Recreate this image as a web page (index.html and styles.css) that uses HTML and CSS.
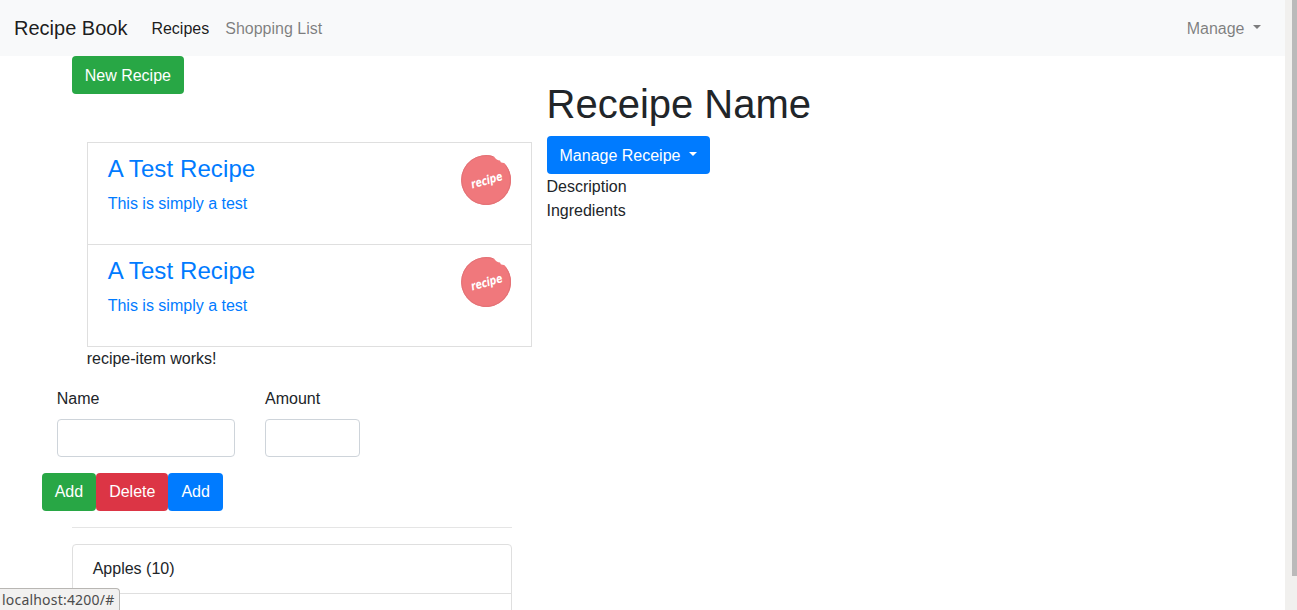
FILE: index.html
```html
<!DOCTYPE html>
<html lang="en">
<head>
<meta charset="utf-8">
<title>Recipe Book</title>
<link rel="stylesheet" href="styles.css">
</head>
<body>
<div class="page">
  <nav class="navbar">
    <a class="brand">Recipe Book</a>
    <a class="nav-link active">Recipes</a>
    <a class="nav-link">Shopping List</a>
    <a class="nav-link manage">Manage<span class="caret"></span></a>
  </nav>
  <main class="columns">
    <section class="left">
      <div class="toolbar"><button class="btn green low">New Recipe</button></div>
      <div class="recipes">
        <a class="recipe">
          <div><h4>A Test Recipe</h4><p>This is simply a test</p></div>
          <svg class="logo" viewBox="0 0 50 50"><path d="M33 1.400A25 25 0 1 0 45 10Q43.500 7.500 41.500 7.800Q39.500 8 39 5.500Q35.500 5.500 33 1.400Z" fill="#f0787c"/><path d="M32 1.600A24.400 24.400 0 1 0 44.600 10.400" fill="none" stroke="#e27276" stroke-width="1"/><text class="script" x="9.500" y="29.500" textLength="32" lengthAdjust="spacingAndGlyphs" transform="rotate(-16 25 25)">recipe</text></svg>
        </a>
        <a class="recipe">
          <div><h4>A Test Recipe</h4><p>This is simply a test</p></div>
          <svg class="logo" viewBox="0 0 50 50"><path d="M33 1.400A25 25 0 1 0 45 10Q43.500 7.500 41.500 7.800Q39.500 8 39 5.500Q35.500 5.500 33 1.400Z" fill="#f0787c"/><path d="M32 1.600A24.400 24.400 0 1 0 44.600 10.400" fill="none" stroke="#e27276" stroke-width="1"/><text class="script" x="9.500" y="29.500" textLength="32" lengthAdjust="spacingAndGlyphs" transform="rotate(-16 25 25)">recipe</text></svg>
        </a>
        <p class="note">recipe-item works!</p>
      </div>
      <form class="edit">
        <div class="fields">
          <label class="field name">Name<input type="text"></label>
          <label class="field amount">Amount<input type="text"></label>
        </div>
        <div class="actions">
          <button type="button" class="btn green">Add</button><button type="button" class="btn red">Delete</button><button type="button" class="btn blue">Add</button>
        </div>
      </form>
      <hr>
      <ul class="shopping">
        <li>Apples (10)</li>
        <li></li>
      </ul>
    </section>
    <section class="detail">
      <h1>Receipe Name</h1>
      <button class="btn blue low">Manage Receipe<span class="caret"></span></button>
      <div class="info">
        <div>Description</div>
        <div>Ingredients</div>
      </div>
    </section>
  </main>
</div>
<div class="scrollbar"><div class="thumb"></div></div>
<div class="status">localhost:4200/#</div>
</body>
</html>
```
FILE: styles.css
```css
* { box-sizing: border-box; }
body {
  margin: 0;
  height: 610px;
  overflow: hidden;
  display: flex;
  background: #fff;
  color: #212529;
  font: 16px/1.5 "Liberation Sans", Arial, sans-serif;
}
h1, h4, p, ul { margin: 0; padding: 0; font-weight: 400; }
.page { width: 1285px; height: 610px; overflow: hidden; }
.navbar {
  display: flex;
  align-items: center;
  height: 56px;
  padding: 0 16px 0 14px;
  background: #f8f9fa;
}
.brand { margin-right: 16px; font-size: 20px; color: rgba(0, 0, 0, .9); }
.nav-link { padding: 10px 8px 8px; color: rgba(0, 0, 0, .5); }
.nav-link.active { color: rgba(0, 0, 0, .9); }
.manage { margin-left: auto; }
.caret {
  display: inline-block;
  margin-left: 8.5px;
  vertical-align: 4.08px;
  border-top: 4.8px solid;
  border-left: 4.8px solid transparent;
  border-right: 4.8px solid transparent;
}
.manage .caret, .low .caret { vertical-align: 5px; }
.columns { display: flex; }
.left { width: 546.5px; padding-left: 71.7px; }
.toolbar { height: 86px; }
.btn {
  display: block;
  height: 38px;
  padding: 6px 12px;
  border: 1px solid transparent;
  border-radius: 4px;
  color: #fff;
  font: inherit;
  white-space: nowrap;
}
.btn.low { padding: 7px 12px 5px; }
.green { background: #28a745; }
.red { background: #dc3545; }
.blue { background: #007bff; }
.recipes { margin: 0 15px; }
.recipe {
  display: flex;
  justify-content: space-between;
  height: 102.8px;
  margin-bottom: -1px;
  padding: 12px 20px;
  border: 1px solid #dfdfdf;
  color: #007bff;
}
.recipe h4 { font-size: 24px; line-height: 28.8px; margin-bottom: 8px; letter-spacing: .1px; }
.logo { width: 50px; height: 50px; }
.script { fill: #fff; font: italic 700 12px "DejaVu Sans", sans-serif; }
.note { padding-top: 1px; }
.edit { margin: 16px 0 0 -30px; }
.fields { display: flex; gap: 30px; padding-left: 15px; }
.field { display: flex; flex-direction: column; gap: 8px; }
.field input {
  width: 100%;
  height: 38px;
  border: 1px solid #ced4da;
  border-radius: 4px;
}
.name { width: 178.3px; }
.amount { width: 95px; }
.actions { display: flex; margin-top: 16px; }
hr { width: 440px; margin: 16px 0; border: 0; border-top: 1px solid #e5e5e5; }
.shopping { width: 440px; border: 1px solid #dfdfdf; border-radius: 4px; list-style: none; }
.shopping li { min-height: 49px; padding: 12px 20px; border-bottom: 1px solid #dfdfdf; }
.detail { padding-top: 24px; }
.detail h1 { font-size: 40px; line-height: 48px; margin-bottom: 8px; }
.info { padding-top: 1px; }
.scrollbar {
  display: flex;
  justify-content: flex-end;
  width: 12px;
  height: 610px;
  background: #f1f0ee;
}
.thumb { width: 5px; height: 576px; background: #bababa; }
.status {
  position: absolute;
  left: 0;
  bottom: 0;
  width: 120px;
  height: 22px;
  padding-left: 2px;
  border: 1px solid #b8b6b3;
  border-width: 1px 1px 0 0;
  border-radius: 0 4px 0 0;
  background: #f2f1f0;
  color: #4c4c4c;
  font: 14px/22px "Noto Sans", sans-serif;
  letter-spacing: .2px;
  white-space: nowrap;
}
```
